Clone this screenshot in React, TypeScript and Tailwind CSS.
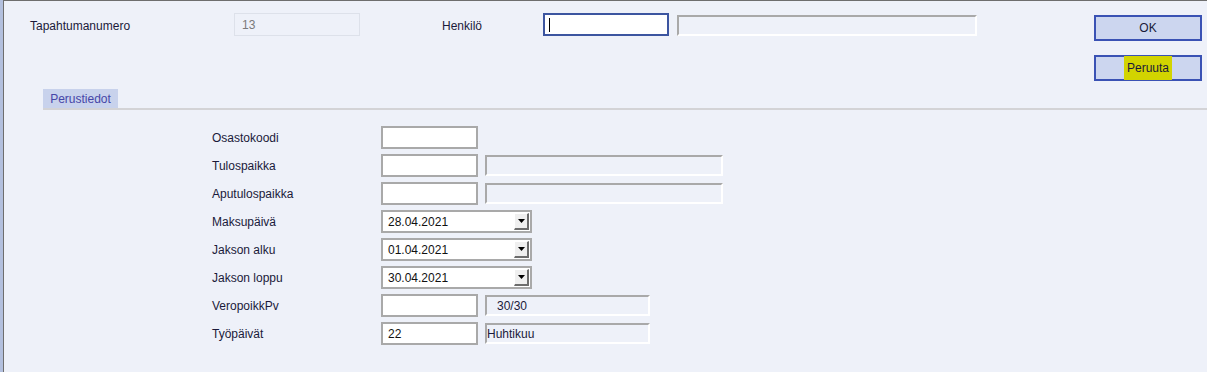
import React from "react";

const font = { fontFamily: '"Liberation Sans", Arial, sans-serif' };

function TextBox({ value, w = "w-[97px]" }: { value?: string; w?: string }) {
    return (
        <div className={`${w} h-[23px] border-2 border-[#a9a9a9] bg-white flex items-center pl-[5px] text-[12px] text-[#111]`}>
            {value}
        </div>
    );
}

function InfoBox({ value, w, pad = "pl-0" }: { value?: string; w: string; pad?: string }) {
    return (
        <div className={`${w} h-[21px] border-t-2 border-l-2 border-[#a9a9a9] border-b-2 border-r-2 border-b-white border-r-white bg-[#eef1f9] flex items-center ${pad} text-[12px] text-[#1a1a3a]`}>
            {value}
        </div>
    );
}

function DateBox({ value }: { value: string }) {
    return (
        <div className="w-[151px] h-[23px] border-2 border-[#a9a9a9] bg-white flex items-center justify-between pl-[5px] pr-[1px] text-[12px] text-[#111]">
            <span>{value}</span>
            <div className="w-[15px] h-[17px] bg-[#efefef] border-t border-l border-white border-r-2 border-b-2 border-r-[#6d6d6d] border-b-[#6d6d6d] flex items-center justify-center">
                <svg width="7" height="4" viewBox="0 0 7 4">
                    <path d="M0 0 H7 L3.5 4 Z" fill="#000" />
                </svg>
            </div>
        </div>
    );
}

type Row = { label: string; field: React.ReactNode; extra?: React.ReactNode };

export default function App() {
    const rows: Row[] = [
        { label: "Osastokoodi", field: <TextBox /> },
        { label: "Tulospaikka", field: <TextBox />, extra: <InfoBox w="w-[238px]" /> },
        { label: "Aputulospaikka", field: <TextBox />, extra: <InfoBox w="w-[238px]" /> },
        { label: "Maksupäivä", field: <DateBox value="28.04.2021" /> },
        { label: "Jakson alku", field: <DateBox value="01.04.2021" /> },
        { label: "Jakson loppu", field: <DateBox value="30.04.2021" /> },
        { label: "VeropoikkPv", field: <TextBox />, extra: <InfoBox w="w-[165px]" value="30/30" pad="pl-[10px]" /> },
        { label: "Työpäivät", field: <TextBox value="22" />, extra: <InfoBox w="w-[165px]" value="Huhtikuu" /> },
    ];

    return (
        <div className="w-[1207px] h-[372px] flex bg-[#eef1f9] overflow-hidden" style={font}>
            <div className="w-[3px] h-full bg-[#b3c0de]" />
            <div className="flex-1 h-full border-l border-t border-[#6e6e6e] flex flex-col">
                <div className="flex justify-between">
                    <div className="flex items-start pt-[12px] pl-[26px]">
                        <div className="w-[204px] mt-[2px] h-[22px] flex items-center text-[12px] text-[#1a1a3a]">Tapahtumanumero</div>
                        <div className="w-[126px] h-[23px] border border-[#dde1ea] flex items-center pl-[7px] pt-[1px] text-[12px] text-[#7a7a7a]">13</div>
                        <div className="ml-[82px] mt-[2px] w-[101px] h-[22px] flex items-center text-[12px] text-[#1a1a3a]">Henkilö</div>
                        <div className="w-[126px] h-[23px] border-2 border-[#3c55a0] bg-white flex items-center pl-[4px]">
                            <div className="w-px h-[14px] bg-black" />
                        </div>
                        <div className="ml-[8px] mt-[2px] w-[300px] h-[21px] border-t-2 border-l-2 border-[#a9a9a9] border-b-2 border-r-2 border-b-white border-r-white" />
                    </div>
                    <div className="flex flex-col gap-[14px] pt-[14px] pr-[5px]">
                        <button className="w-[108px] h-[26px] bg-[#ccd6ef] border-2 border-[#3a52b4] text-[12px] text-[#1a1a3a]">OK</button>
                        <button className="w-[108px] h-[26px] bg-[#ccd6ef] border-2 border-[#3a52b4] text-[12px] text-[#1a1a3a] flex items-center justify-center">
                            <span className="bg-[#d2d400] px-[3px] py-[3px]">Peruuta</span>
                        </button>
                    </div>
                </div>
                <div className="mt-[8px] pl-[39px]">
                    <div className="w-[75px] h-[19px] bg-[#c8d2ec] flex items-center justify-center text-[12px] text-[#4646a8]">Perustiedot</div>
                    <div className="h-[2px] bg-[#d3d3d6]" />
                </div>
                <div className="pt-[16px] pl-[208px] flex flex-col gap-[5px]">
                    {rows.map((r) => (
                        <div key={r.label} className="flex items-center h-[23px]">
                            <div className="w-[169px] text-[12px] text-[#1a1a3a]">{r.label}</div>
                            {r.field}
                            {r.extra && <div className="ml-[7px]">{r.extra}</div>}
                        </div>
                    ))}
                </div>
            </div>
        </div>
    );
}
